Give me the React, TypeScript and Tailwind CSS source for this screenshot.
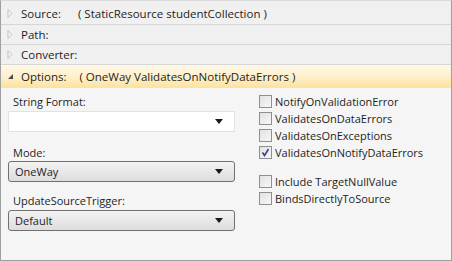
import React from "react";

const font = { fontFamily: '"Open Sans", "Noto Sans", sans-serif' };

function Tri({ open }: { open?: boolean }) {
  if (open)
    return (
      <svg width="7" height="7" viewBox="0 0 7 7" className="shrink-0">
        <path d="M6 1 L6 6 L1 6 Z" fill="#4a4a4a" />
      </svg>
    );
  return (
    <svg width="6" height="9" viewBox="0 0 6 9" className="shrink-0">
      <path d="M1 0.5 L5 4.5 L1 8.5 Z" fill="#f4f4f4" stroke="#c2c2c2" strokeWidth="1" />
    </svg>
  );
}

function Arrow() {
  return (
    <svg width="8" height="5" viewBox="0 0 8 5">
      <path d="M0 0 L8 0 L4 5 Z" fill="#1a1a1a" />
    </svg>
  );
}

function Combo({ value, editable }: { value?: string; editable?: boolean }) {
  return (
    <div
      className={
        "flex items-center justify-between h-[21px] pl-[6px] pr-[11px] " +
        (editable
          ? "bg-white border border-[#dde3e8]"
          : "rounded-[3px] border border-[#707070] bg-gradient-to-b from-[#f3f3f3] to-[#dddddd]")
      }
    >
      <span>{value ?? ""}</span>
      <Arrow />
    </div>
  );
}

function Check({ label, checked }: { label: string; checked?: boolean }) {
  return (
    <div className="flex items-center h-[17px]">
      <div className="w-[13px] h-[13px] border border-[#8e8f8f] bg-gradient-to-br from-[#e2e2e2] to-[#f7f7f7] flex items-center justify-center mr-[3px]">
        {checked && (
          <svg width="9" height="9" viewBox="0 0 9 9">
            <path d="M1.5 4.5 L3.5 7.5 L7.5 1" fill="none" stroke="#31468a" strokeWidth="1.6" />
          </svg>
        )}
      </div>
      <span>{label}</span>
    </div>
  );
}

export default function App() {
  return (
    <div
      className="w-[452px] h-[261px] bg-[#f5f5f5] text-[11px] leading-none text-[#1e1e1e] flex flex-col border-x border-b border-t border-x-[#a0a0a0] border-b-[#a0a0a0] border-t-[#dadada] overflow-hidden"
      style={font}
    >
      <div className="text-[11.5px] flex flex-col">
        <div className="h-[24px] flex items-center pl-[6px] pt-[2px] border-b border-[#d6d6d6] bg-[#f0f0f0]">
          <div className="w-[14px] flex items-center">
            <Tri />
          </div>
          <span>Source:</span>
          <span className="ml-[17px]">( StaticResource studentCollection )</span>
        </div>
        <div className="h-[20px] flex items-center pl-[6px] border-b border-[#d6d6d6] bg-[#f0f0f0]">
          <div className="w-[14px] flex items-center">
            <Tri />
          </div>
          <span>Path:</span>
        </div>
        <div className="h-[20px] flex items-center pl-[6px] border-b border-[#d6d6d6] bg-[#f0f0f0]">
          <div className="w-[14px] flex items-center">
            <Tri />
          </div>
          <span>Converter:</span>
        </div>
        <div className="h-[23px] flex items-center pl-[6px] bg-gradient-to-b from-[#fdf8e8] via-[#fdf0cc] to-[#fde29b]">
          <div className="w-[14px] flex items-center">
            <Tri open />
          </div>
          <span>Options:</span>
          <span className="ml-[13px]">( OneWay ValidatesOnNotifyDataErrors )</span>
        </div>
      </div>
      <div className="flex">
        <div className="w-[227px] ml-[7px] flex flex-col pt-[6px]">
          <div className="h-[14px] flex items-center pl-[5px] mb-[3px]">String Format:</div>
          <Combo editable />
          <div className="h-[14px] flex items-center pl-[5px] mt-[13px] mb-[2px]">Mode:</div>
          <Combo value="OneWay" />
          <div className="h-[14px] flex items-center pl-[5px] mt-[11px] mb-[3px]">UpdateSourceTrigger:</div>
          <Combo value="Default" />
        </div>
        <div className="ml-[24px] flex flex-col pt-[5px]">
          <Check label="NotifyOnValidationError" />
          <Check label="ValidatesOnDataErrors" />
          <Check label="ValidatesOnExceptions" />
          <Check label="ValidatesOnNotifyDataErrors" checked />
          <div className="h-[12px]" />
          <Check label="Include TargetNullValue" />
          <Check label="BindsDirectlyToSource" />
        </div>
      </div>
    </div>
  );
}
